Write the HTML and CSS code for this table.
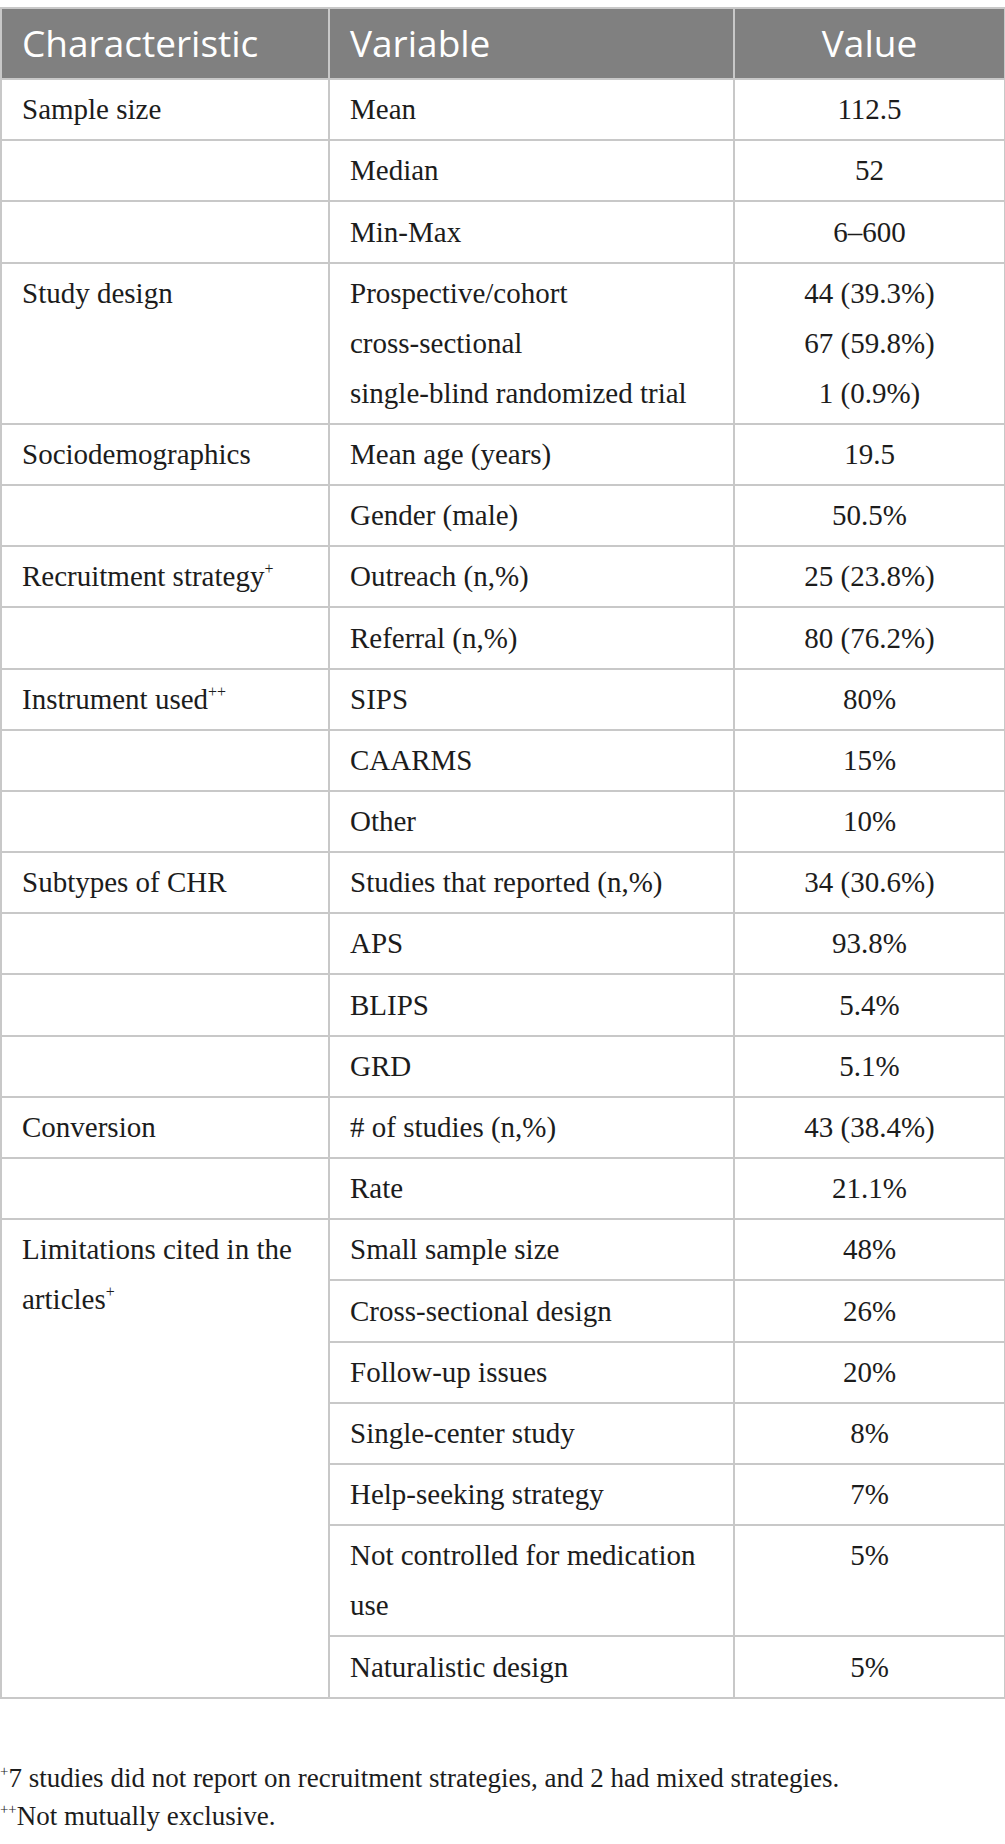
FILE: index.html
```html
<!DOCTYPE html>
<html>
<head>
<meta charset="utf-8">
<link rel="stylesheet" href="styles.css">
</head>
<body>
<table class="tbl">
  <colgroup>
    <col class="c1"><col class="c2"><col class="c3">
  </colgroup>
  <thead>
    <tr><th class="left">Characteristic</th><th class="left">Variable</th><th class="center">Value</th></tr>
  </thead>
  <tbody>
    <tr><td>Sample size</td><td>Mean</td><td class="val">112.5</td></tr>
    <tr><td></td><td>Median</td><td class="val">52</td></tr>
    <tr><td></td><td>Min-Max</td><td class="val">6–600</td></tr>
    <tr><td>Study design</td><td>Prospective/cohort<br>cross-sectional<br>single-blind randomized trial</td><td class="val">44 (39.3%)<br>67 (59.8%)<br>1 (0.9%)</td></tr>
    <tr><td>Sociodemographics</td><td>Mean age (years)</td><td class="val">19.5</td></tr>
    <tr><td></td><td>Gender (male)</td><td class="val">50.5%</td></tr>
    <tr><td>Recruitment strategy<sup>+</sup></td><td>Outreach (n,%)</td><td class="val">25 (23.8%)</td></tr>
    <tr><td></td><td>Referral (n,%)</td><td class="val">80 (76.2%)</td></tr>
    <tr><td>Instrument used<sup>++</sup></td><td>SIPS</td><td class="val">80%</td></tr>
    <tr><td></td><td>CAARMS</td><td class="val">15%</td></tr>
    <tr><td></td><td>Other</td><td class="val">10%</td></tr>
    <tr><td>Subtypes of CHR</td><td>Studies that reported (n,%)</td><td class="val">34 (30.6%)</td></tr>
    <tr><td></td><td>APS</td><td class="val">93.8%</td></tr>
    <tr><td></td><td>BLIPS</td><td class="val">5.4%</td></tr>
    <tr><td></td><td>GRD</td><td class="val">5.1%</td></tr>
    <tr><td>Conversion</td><td># of studies (n,%)</td><td class="val">43 (38.4%)</td></tr>
    <tr><td></td><td>Rate</td><td class="val">21.1%</td></tr>
    <tr><td rowspan="7">Limitations cited in the articles<sup>+</sup></td><td>Small sample size</td><td class="val">48%</td></tr>
    <tr><td>Cross-sectional design</td><td class="val">26%</td></tr>
    <tr><td>Follow-up issues</td><td class="val">20%</td></tr>
    <tr><td>Single-center study</td><td class="val">8%</td></tr>
    <tr><td>Help-seeking strategy</td><td class="val">7%</td></tr>
    <tr><td>Not controlled for medication use</td><td class="val">5%</td></tr>
    <tr><td>Naturalistic design</td><td class="val">5%</td></tr>
  </tbody>
</table>
<div class="notes">
  <p><sup>+</sup>7 studies did not report on recruitment strategies, and 2 had mixed strategies.</p>
  <p><sup>++</sup>Not mutually exclusive.</p>
</div>
</body>
</html>
```
FILE: styles.css
```css
html, body {
  margin: 0;
  padding: 0;
  background: #ffffff;
}
body {
  padding-top: 7px;
  font-family: "Liberation Serif", "Times New Roman", serif;
  color: #1c1c1c;
}
.tbl {
  border-collapse: collapse;
  width: 1004px;
  table-layout: fixed;
}
.c1 { width: 328px; }
.c2 { width: 405px; }
.c3 { width: 271px; }
.tbl th {
  background: #808080;
  color: #ffffff;
  font-family: "Open Sans", "Noto Sans", sans-serif;
  font-weight: 400;
  font-size: 37px;
  line-height: 48px;
  padding: 9.5px 20px 11.5px 20px;
  border: 2px solid #c8c8c8;
  vertical-align: top;
}
.tbl th.left { text-align: left; }
.tbl th.center { text-align: center; }
.tbl td {
  font-size: 29px;
  line-height: 50px;
  padding: 4.2px 20px 5px 20px;
  border: 2px solid #c8c8c8;
  vertical-align: top;
  text-align: left;
}
.tbl td.val { text-align: center; }
sup {
  font-size: 0.55em;
  line-height: 0;
  vertical-align: 0.75em;
}
.notes {
  padding-top: 60px;
  font-size: 27px;
  line-height: 38px;
}
.notes p { margin: 0; }
.notes sup { font-size: 0.55em; }
```
